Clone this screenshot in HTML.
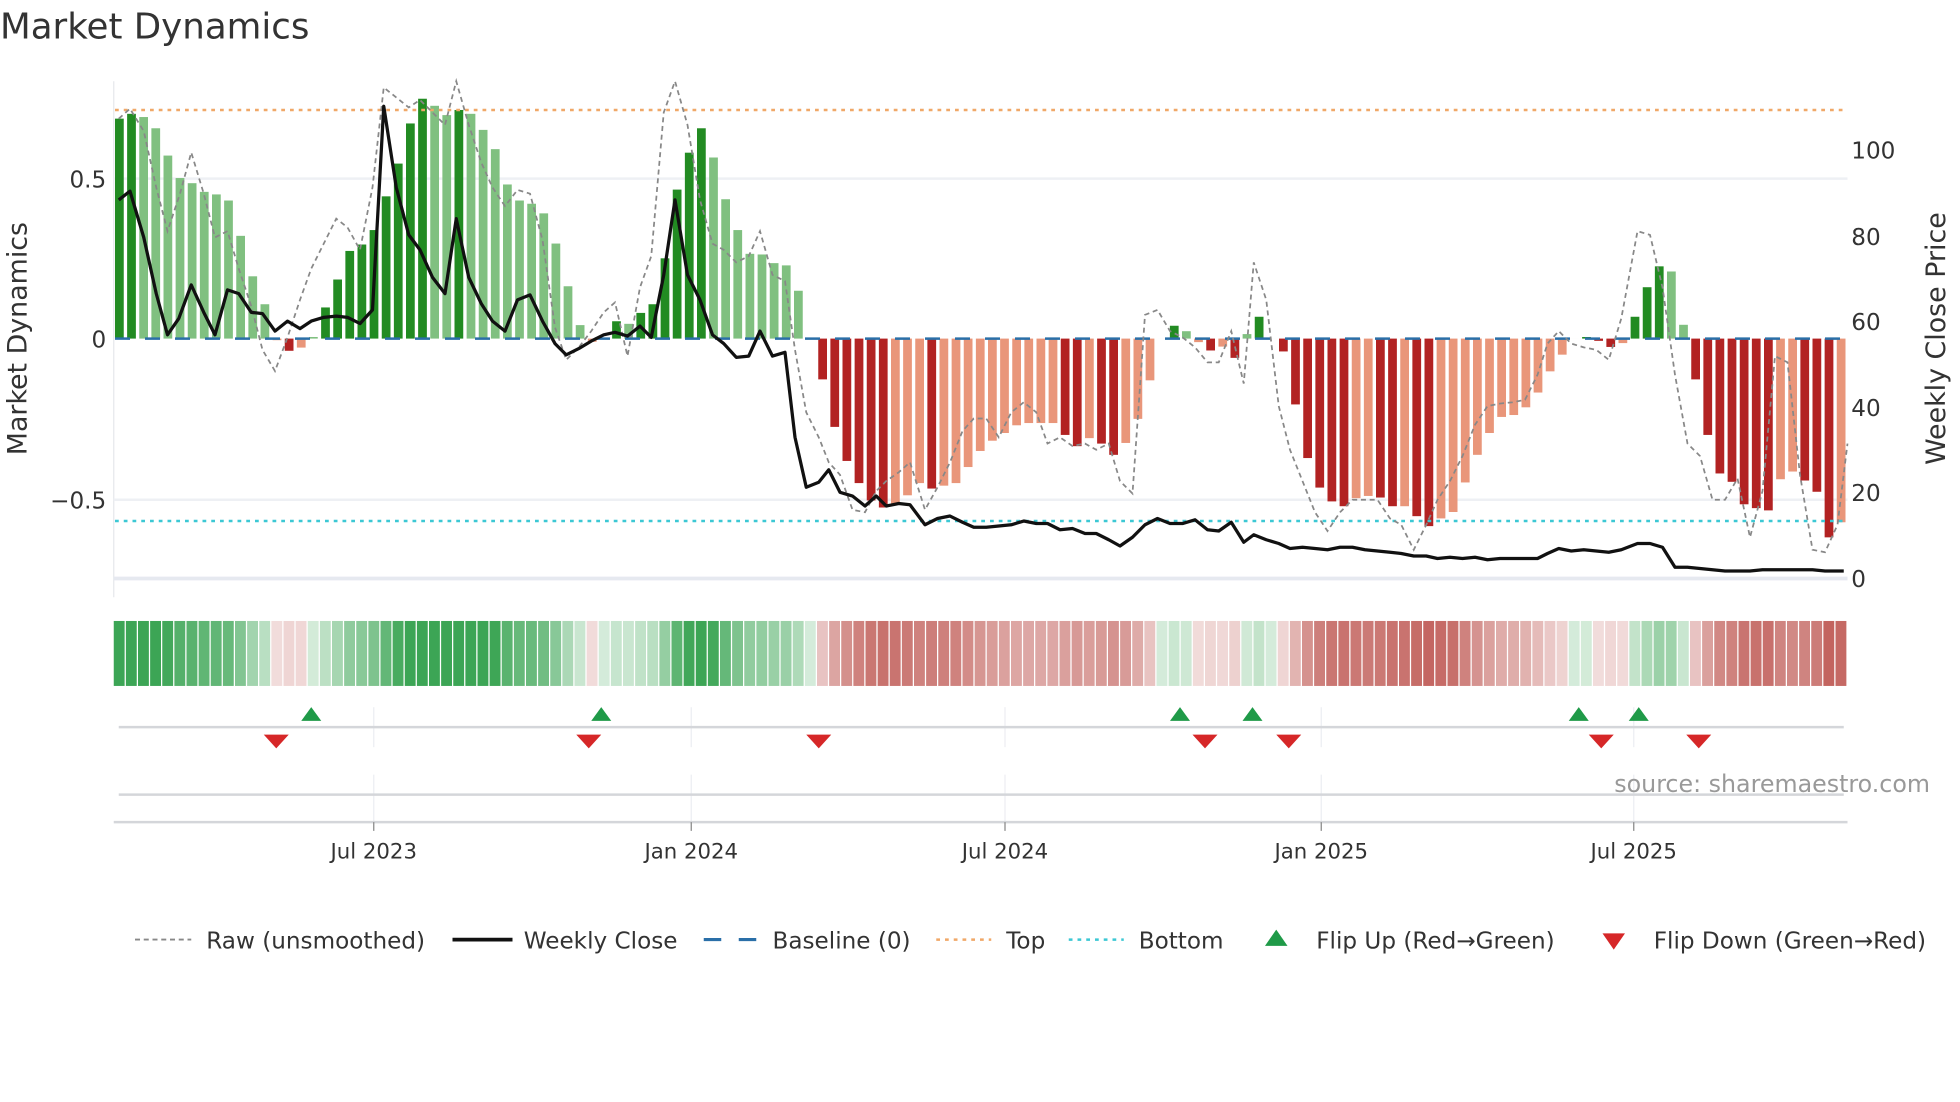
<!DOCTYPE html>
<html><head><meta charset="utf-8"><style>
html,body{margin:0;padding:0;background:#fff;}
svg{display:block;font-family:"DejaVu Sans","Liberation Sans",sans-serif;}
</style></head><body>
<svg id="s" width="1960" height="1102" viewBox="0 0 1568 882" preserveAspectRatio="none" xmlns="http://www.w3.org/2000/svg">
<text x="0" y="31" font-size="28.5" fill="#333">Market Dynamics</text>
<line x1="91" y1="65" x2="91" y2="478" stroke="#e6e8ec" stroke-width="1"/>
<line x1="91" y1="143" x2="1478" y2="143" stroke="#eef0f4" stroke-width="2"/>
<line x1="91" y1="400" x2="1478" y2="400" stroke="#eef0f4" stroke-width="2"/>
<line x1="91" y1="463" x2="1478" y2="463" stroke="#e6e9f0" stroke-width="3"/>
<g font-size="18.5" fill="#333" text-anchor="end">
<text x="85" y="150">0.5</text><text x="85" y="278">0</text><text x="85" y="407">−0.5</text></g>
<g font-size="18.5" fill="#333">
<text x="1481" y="127">100</text><text x="1481" y="196">80</text><text x="1481" y="264">60</text><text x="1481" y="333">40</text><text x="1481" y="401">20</text><text x="1481" y="470">0</text></g>
<text transform="translate(21,271) rotate(-90)" font-size="21.5" fill="#333" text-anchor="middle">Market Dynamics</text>
<text transform="translate(1556,271) rotate(-90)" font-size="21.5" fill="#333" text-anchor="middle">Weekly Close Price</text>
<g id="bars"></g>
<line x1="92" y1="88" x2="1476" y2="88" stroke="#f0a868" stroke-width="2" stroke-dasharray="3,4"/>
<line x1="92" y1="417" x2="1476" y2="417" stroke="#3cc8d4" stroke-width="2" stroke-dasharray="3,4"/>
<line x1="92" y1="271" x2="1476" y2="271" stroke="#2a6fa8" stroke-width="2" stroke-dasharray="12,12"/>
<polyline id="raw" fill="none" stroke="#888" stroke-width="1.4" stroke-dasharray="4,3"/>
<polyline id="close" fill="none" stroke="#111" stroke-width="2.6" stroke-linejoin="round"/>
<g id="heat"></g>
<g stroke="#eceef2" stroke-width="1">
<line x1="299" y1="566" x2="299" y2="598"/><line x1="553" y1="566" x2="553" y2="598"/><line x1="804" y1="566" x2="804" y2="598"/><line x1="1057" y1="566" x2="1057" y2="598"/><line x1="1307" y1="566" x2="1307" y2="598"/>
<line x1="299" y1="620" x2="299" y2="658"/><line x1="553" y1="620" x2="553" y2="658"/><line x1="804" y1="620" x2="804" y2="658"/><line x1="1057" y1="620" x2="1057" y2="658"/><line x1="1307" y1="620" x2="1307" y2="658"/></g>
<line x1="95" y1="582" x2="1475" y2="582" stroke="#d4d6da" stroke-width="2"/>
<line x1="95" y1="636" x2="1475" y2="636" stroke="#d4d6da" stroke-width="2"/>
<line x1="91" y1="658" x2="1478" y2="658" stroke="#d4d6da" stroke-width="2"/>
<g stroke="#888" stroke-width="1"><line x1="299" y1="658" x2="299" y2="665"/><line x1="553" y1="658" x2="553" y2="665"/><line x1="804" y1="658" x2="804" y2="665"/><line x1="1057" y1="658" x2="1057" y2="665"/><line x1="1307" y1="658" x2="1307" y2="665"/></g>
<g fill="#1f9a48">
<polygon points="241,577 249,566 257,577"/><polygon points="473,577 481,566 489,577"/><polygon points="936,577 944,566 952,577"/><polygon points="994,577 1002,566 1010,577"/><polygon points="1255,577 1263,566 1271,577"/><polygon points="1303,577 1311,566 1319,577"/></g>
<g fill="#d62728">
<polygon points="211,588 231,588 221,599"/><polygon points="461,588 481,588 471,599"/><polygon points="645,588 665,588 655,599"/><polygon points="954,588 974,588 964,599"/><polygon points="1021,588 1041,588 1031,599"/><polygon points="1271,588 1291,588 1281,599"/><polygon points="1349,588 1369,588 1359,599"/></g>
<text x="1544" y="634" font-size="19" fill="#999" text-anchor="end">source: sharemaestro.com</text>
<g font-size="17" fill="#333" text-anchor="middle">
<text x="299" y="687">Jul 2023</text><text x="553" y="687">Jan 2024</text><text x="804" y="687">Jul 2024</text><text x="1057" y="687">Jan 2025</text><text x="1307" y="687">Jul 2025</text></g>
<g font-size="18.5" fill="#333">
<line x1="108" y1="752" x2="153" y2="752" stroke="#888" stroke-width="1.5" stroke-dasharray="4,3"/><text x="165" y="759">Raw (unsmoothed)</text>
<line x1="362" y1="752" x2="410" y2="752" stroke="#111" stroke-width="3"/><text x="419" y="759">Weekly Close</text>
<line x1="563" y1="752" x2="607" y2="752" stroke="#2a6fa8" stroke-width="2.5" stroke-dasharray="14,14"/><text x="618" y="759">Baseline (0)</text>
<line x1="749" y1="752" x2="793" y2="752" stroke="#f0a868" stroke-width="2" stroke-dasharray="3,4"/><text x="805" y="759">Top</text>
<line x1="855" y1="752" x2="899" y2="752" stroke="#3cc8d4" stroke-width="2" stroke-dasharray="3,4"/><text x="911" y="759">Bottom</text>
<polygon points="1012,757 1021,744 1030,757" fill="#1f9a48"/><text x="1053" y="759">Flip Up (Red→Green)</text>
<polygon points="1282,747 1300,747 1291,760" fill="#d62728"/><text x="1323" y="759">Flip Down (Green→Red)</text>
</g>
</svg>
<script>
var V=[.685,.70,.69,.655,.57,.50,.484,.457,.449,.43,.32,.194,.107,-.005,-.038,-.028,.005,.097,.184,.273,.293,.338,.443,.545,.67,.747,.725,.696,.712,.70,.65,.59,.48,.43,.42,.39,.296,.163,.042,-.01,0,.054,.046,.08,.107,.25,.464,.579,.655,.564,.434,.338,.264,.262,.235,.228,.149,0,-.127,-.275,-.381,-.45,-.504,-.526,-.516,-.488,-.45,-.467,-.458,-.45,-.40,-.35,-.318,-.294,-.27,-.263,-.263,-.263,-.30,-.335,-.31,-.327,-.362,-.325,-.25,-.13,0,.04,.023,-.011,-.037,-.025,-.06,.014,.068,0,-.04,-.205,-.372,-.464,-.507,-.522,-.497,-.49,-.495,-.522,-.522,-.553,-.584,-.56,-.54,-.448,-.362,-.294,-.244,-.238,-.214,-.168,-.102,-.05,0,.005,-.007,-.026,-.014,.068,.16,.225,.209,.043,-.127,-.30,-.42,-.446,-.516,-.528,-.535,-.438,-.414,-.442,-.477,-.619,-.572];
var ns="http://www.w3.org/2000/svg",b=document.getElementById('bars'),h=document.getElementById('heat');
for(var i=0;i<V.length;i++){var v=V[i],x=92+9.7*i,dk=(i>0&&Math.abs(v)>Math.abs(V[i-1]))||i<2;
 var r=document.createElementNS(ns,'rect');var y0=271,y1=271-v*257;
 r.setAttribute('x',x);r.setAttribute('width',7);r.setAttribute('y',Math.min(y0,y1));r.setAttribute('height',Math.max(Math.abs(y1-y0),0.01));
 r.setAttribute('fill',v>=0?(dk?'#228b22':'#80c080'):(dk?'#b22222':'#e9967a'));b.appendChild(r);
 var c=document.createElementNS(ns,'rect');c.setAttribute('x',91+9.7*i);c.setAttribute('width',8.7);c.setAttribute('y',497);c.setAttribute('height',52);
 var a=Math.min(1,0.22+0.85*Math.abs(v)/0.65);c.setAttribute('fill',v>=0?'rgb(60,165,85)':'rgb(195,100,95)');c.setAttribute('fill-opacity',a);h.appendChild(c);}
var C="95,160 104,153 115,190 125,235 134,268 143,255 153,228 163,250 172,268 182,232 191,235 201,250 210,251 220,265 230,257 240,263 249,257 259,254 269,253 278,254 288,259 298,248 307,85 317,150 327,188 336,200 346,222 356,235 365,175 375,222 385,243 394,257 404,265 414,240 424,236 434,257 444,275 453,284 463,279 473,273 483,268 492,266 502,269 512,261 521,270 531,220 540,160 550,220 560,240 570,268 579,275 589,286 599,285 608,265 618,285 628,282 636,350 645,390 655,386 663,376 672,394 682,397 692,405 701,397 709,405 719,403 728,404 740,420 750,415 760,413 770,418 779,422 789,422 799,421 809,420 819,417 829,419 838,419 848,424 858,423 868,427 877,427 887,432 896,437 906,430 916,420 926,415 936,419 946,419 956,416 966,424 975,425 985,418 995,434 1003,428 1013,432 1023,435 1032,439 1042,438 1052,439 1062,440 1072,438 1082,438 1092,440 1102,441 1112,442 1121,443 1131,445 1141,445 1150,447 1160,446 1170,447 1180,446 1190,448 1200,447 1210,447 1220,447 1230,447 1238,443 1247,439 1257,441 1267,440 1277,441 1287,442 1297,440 1310,435 1320,435 1330,438 1340,454 1350,454 1360,455 1370,456 1380,457 1390,457 1400,457 1410,456 1420,456 1430,456 1440,456 1450,456 1460,457 1475,457";
document.getElementById('close').setAttribute('points',C);
var R="95,95 104,87 115,105 125,150 134,185 144,155 153,122 163,155 172,190 182,185 191,215 201,245 210,280 220,297 230,270 240,240 249,215 259,195 269,175 278,182 288,200 298,150 307,70 317,78 327,86 336,80 346,90 356,100 365,65 375,100 385,130 394,150 404,165 414,152 424,155 434,192 444,262 453,288 463,278 473,265 483,250 492,242 502,285 512,230 521,205 531,90 540,65 550,100 560,160 570,195 579,200 589,210 599,205 608,185 618,220 628,225 636,280 645,330 655,350 663,370 672,380 682,408 692,410 701,393 709,385 719,378 728,370 740,408 750,390 760,370 770,345 779,335 789,335 799,350 809,330 819,322 829,330 838,355 848,350 858,357 868,355 877,360 887,355 896,385 906,395 916,252 926,248 936,265 946,270 956,278 966,290 975,290 985,265 995,307 1003,210 1013,240 1023,325 1032,360 1042,385 1052,410 1062,425 1072,410 1082,400 1092,400 1102,400 1112,415 1121,420 1131,440 1141,420 1150,400 1160,385 1170,365 1180,340 1190,325 1200,323 1210,322 1220,320 1230,300 1238,275 1247,265 1257,275 1267,278 1277,280 1287,288 1297,255 1310,185 1320,188 1330,230 1340,300 1350,355 1360,365 1370,400 1380,400 1390,383 1400,430 1410,393 1420,285 1430,290 1440,380 1450,440 1460,442 1470,420 1478,355";
document.getElementById('raw').setAttribute('points',R);
</script>
</body></html>
